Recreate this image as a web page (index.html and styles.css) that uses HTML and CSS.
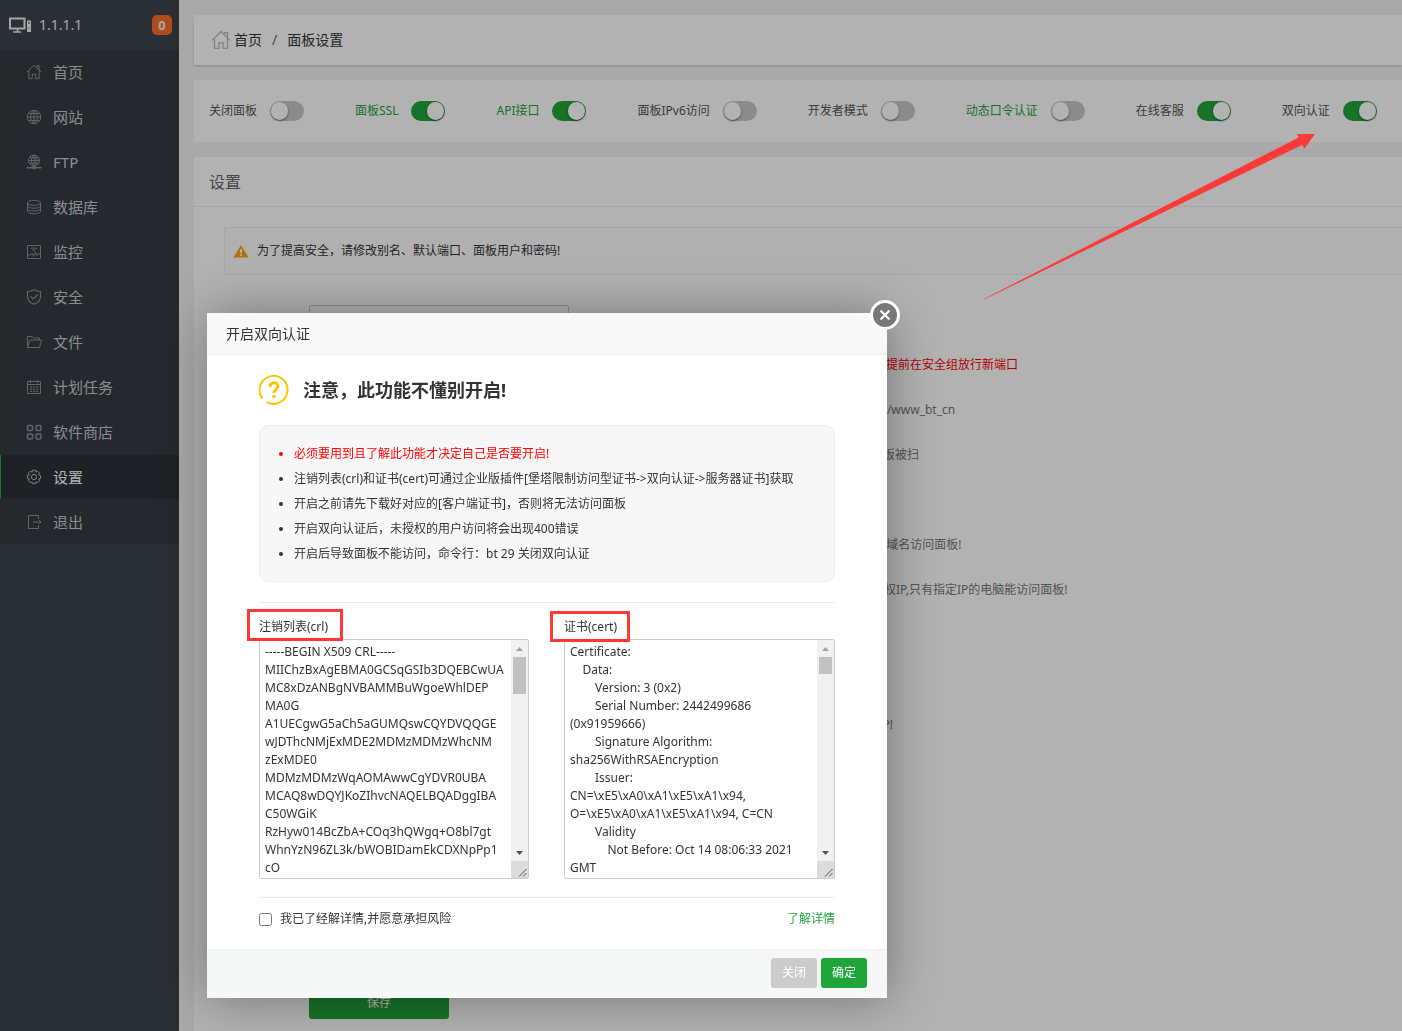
FILE: index.html
```
<!DOCTYPE html>
<html lang="zh-CN">
<head>
<meta charset="utf-8">
<meta name="viewport" content="width=device-width, initial-scale=1">
<title>面板设置</title>
<link rel="stylesheet" href="styles.css">
</head>
<body>
<div class="app">
  <nav class="sidebar">
    <div class="server">
      <svg class="server-icon" viewBox="0 0 24 18" fill="none" stroke="#eee" stroke-width="2"><path d="M2 2.500h14.500v10H2z"/><path d="M5 16h8M9.500 13v3" stroke-width="1.600"/><path d="M19 4.500h4v11.500h-4z" fill="#eee" stroke="none"/><path d="M20 7h2M20.500 12h1" stroke="#3c444d" stroke-width="1"/></svg>
      <span class="server-ip">1.1.1.1</span>
      <span class="badge">0</span>
    </div>
    <ul class="menu">
      <li><a href="#"><svg viewBox="0 0 16 16"><path d="M.8 8.300 8 1.200l7.200 7.100M2.800 7v7.700h3.500v-4.500h3.400v4.500h3.500V7M11 3.500V2h2.200v4"/></svg>首页</a></li>
      <li><a href="#"><svg viewBox="0 0 16 16"><circle cx="8" cy="8" r="6.700"/><path d="M1.300 8h13.400M8 1.300v13.400M2.500 4.500h11M2.500 11.500h11M8 1.300c-4.500 4-4.500 9.400 0 13.400M8 1.300c4.500 4 4.500 9.400 0 13.400"/></svg>网站</a></li>
      <li><a href="#"><svg viewBox="0 0 16 16"><circle cx="8" cy="6.500" r="5.500"/><path d="M2.500 6.500h11M8 1v13M3.500 3.700h9M3.500 9.300h9M8 1C4.500 4 4.500 9 8 12M8 1c3.500 3 3.500 8 0 11"/><path d="M.5 13.700h15" stroke-width="1.500"/><path d="M6.500 13.700h3" stroke-width="3"/></svg>FTP</a></li>
      <li><a href="#"><svg viewBox="0 0 16 16"><ellipse cx="8" cy="3.800" rx="6.500" ry="2.500"/><path d="M1.500 3.800v8.500c0 3.400 13 3.400 13 0V3.800M1.500 6.700c0 3.400 13 3.400 13 0M1.500 9.500c0 3.400 13 3.400 13 0"/></svg>数据库</a></li>
      <li><a href="#"><svg viewBox="0 0 16 16"><path d="M1.500 1.500h13v13h-13zM5 4.200h6M6.500 6.200h3M1.500 11h3l1.500-2 1.500 3.500L9.500 8l1.500 3.500 1-1.500h2.500"/></svg>监控</a></li>
      <li><a href="#"><svg viewBox="0 0 16 16"><path d="M8 .8c2 1.300 4.300 1.700 6.500 1.700v5.300c0 3.700-2.500 6-6.500 7.500-4-1.500-6.500-3.800-6.500-7.500V2.500C3.700 2.500 6 2.100 8 .8zM4.500 7.500 7.200 10l4.500-4.500" stroke-width="1.200"/></svg>安全</a></li>
      <li><a href="#"><svg viewBox="0 0 16 16"><path d="M1.500 13V2.500h4.800L7.500 4h6v2M1.500 13.500 4 6h11.500l-2 7.500z"/></svg>文件</a></li>
      <li><a href="#"><svg viewBox="0 0 16 16"><path d="M1.500 2.500h13v12h-13zM1.500 5.500h13M4.500 1v3M11.500 1v3"/><path d="M4 8h8M4 10.200h8M4 12.400h8" stroke-dasharray="2 1"/></svg>计划任务</a></li>
      <li><a href="#"><svg viewBox="0 0 16 16" stroke-width="1.500"><rect x="1.500" y="1.500" width="5" height="5" rx="1"/><rect x="10" y="1.500" width="5" height="5" rx="1"/><rect x="1.500" y="10" width="5" height="5" rx="1"/><rect x="10" y="10" width="5" height="5" rx="1"/></svg>软件商店</a></li>
      <li class="active"><a href="#"><svg viewBox="0 0 16 16"><path d="M6.600 1.200h2.800l.5 1.900 1.700-.9 2 2-.9 1.700 1.900.6v2.900l-1.900.6.9 1.700-2 2-1.700-.9-.5 1.900H6.600l-.5-1.900-1.700.9-2-2 .9-1.700-1.900-.6V6.500l1.900-.6-.9-1.700 2-2 1.700.9z"/><circle cx="8" cy="8" r="2.600"/></svg>设置</a></li>
      <li><a href="#"><svg viewBox="0 0 16 16"><path d="M12.500 5V1.500h-10v13h10V11M7 8h8M13 6l2 2-2 2"/></svg>退出</a></li>
    </ul>
  </nav>

  <main class="main">
    <div class="card crumbs">
      <svg class="home-icon" viewBox="0 0 16 16"><path d="M.8 8.300 8 1.200l7.200 7.100M2.800 7v7.700h3.500v-4.500h3.400v4.500h3.500V7M11 3.500V2h2.200v4"/></svg>
      <a href="#">首页</a><span class="slash">/</span><span>面板设置</span>
    </div>

    <div class="card switches">
      <div class="switch-item"><label for="s1">关闭面板</label><input class="switch" type="checkbox" id="s1"></div>
      <div class="switch-item link"><label for="s2">面板SSL</label><input class="switch" type="checkbox" id="s2" checked></div>
      <div class="switch-item link"><label for="s3">API接口</label><input class="switch" type="checkbox" id="s3" checked></div>
      <div class="switch-item"><label for="s4">面板IPv6访问</label><input class="switch" type="checkbox" id="s4"></div>
      <div class="switch-item"><label for="s5">开发者模式</label><input class="switch" type="checkbox" id="s5"></div>
      <div class="switch-item link"><label for="s6">动态口令认证</label><input class="switch" type="checkbox" id="s6"></div>
      <div class="switch-item"><label for="s7">在线客服</label><input class="switch" type="checkbox" id="s7" checked></div>
      <div class="switch-item"><label for="s8">双向认证</label><input class="switch" type="checkbox" id="s8" checked></div>
    </div>

    <section class="card settings">
      <h2>设置</h2>
      <div class="settings-body">
        <div class="alert">
          <svg viewBox="0 0 16 14"><path d="M8 1 15.500 13.500H.5z" fill="#ff9f0f"/><path d="M7 5.200h2v3.600H7zM7 10h2v1.800H7z" fill="#fff"/></svg>
          为了提高安全，请修改别名、默认端口、面板用户和密码!
        </div>
        <form class="form">
          <div class="row"><input aria-label="别名"></div>
          <div class="row"><input aria-label="面板端口"><span class="hint danger">建议端口范围8888 - 65535， 注意：有安全组的服务器请提前在安全组放行新端口</span></div>
          <div class="row"><input aria-label="安全入口"><span class="hint">面板管理入口,设置后只能通过指定安全入口登录面板, 如: /www_bt_cn</span></div>
          <div class="row"><input aria-label="未认证状态"><span class="hint">用于未登录且未正确输入安全入口时的响应，可以防止面板被扫</span></div>
          <div class="row"><input aria-label="超时时间"></div>
          <div class="row"><input aria-label="绑定域名"><span class="hint">为面板绑定一个访问域名；注意：一旦绑定域名,只能通过域名访问面板!</span></div>
          <div class="row"><input aria-label="授权IP"><span class="hint">设置访问授权IP,多个请使用逗号隔开；注意：一旦设置授权IP,只有指定IP的电脑能访问面板!</span></div>
          <div class="row"><input aria-label="建站目录"></div>
          <div class="row"><input aria-label="备份目录"></div>
          <div class="row"><input aria-label="服务器IP"><span class="hint">默认为外网IP,若您在本地虚拟机测试, 请填写虚拟机内网IP!</span></div>
          <div class="row"><input aria-label="服务器时间"></div>
          <div class="row"><input aria-label="面板用户"></div>
          <div class="row"><input aria-label="面板密码"></div>
          <div class="row"><input aria-label="宝塔账号"></div>
          <div class="row"><input aria-label="菜单管理"></div>
          <button class="save" type="button">保存</button>
        </form>
      </div>
    </section>
  </main>
</div>

<div class="overlay"></div>

<div class="modal" role="dialog" aria-labelledby="modal-title">
  <button class="close" type="button" aria-label="关闭窗口"><svg viewBox="0 0 12 12"><path d="M1.500 1.500l9 9M10.500 1.500l-9 9"/></svg></button>
  <header class="modal-head" id="modal-title">开启双向认证</header>
  <div class="modal-body">
    <div class="notice">
      <svg viewBox="0 0 30 30" fill="none" stroke="#f8c600"><path d="M3.500 23.500A14 14 0 1 1 7.500 27" stroke-width="2"/><path d="M11 12c0-5.500 8-5.500 8-.7 0 3.200-4 3-4 6.700" stroke-width="3"/><path d="M13.500 20h3v3h-3z" fill="#f8c600" stroke="none"/></svg>
      <h3>注意，此功能不懂别开启!</h3>
    </div>
    <ul class="tips">
      <li class="warn">必须要用到且了解此功能才决定自己是否要开启!</li>
      <li>注销列表(crl)和证书(cert)可通过企业版插件[堡塔限制访问型证书-&gt;双向认证-&gt;服务器证书]获取</li>
      <li>开启之前请先下载好对应的[客户端证书]，否则将无法访问面板</li>
      <li>开启双向认证后，未授权的用户访问将会出现400错误</li>
      <li>开启后导致面板不能访问，命令行：bt 29 关闭双向认证</li>
    </ul>
    <div class="certs">
      <div class="cert">
        <label for="crl">注销列表(crl)</label>
        <div class="area">
          <textarea id="crl">-----BEGIN X509 CRL-----
MIIChzBxAgEBMA0GCSqGSIb3DQEBCwUA
MC8xDzANBgNVBAMMBuWgoeWhlDEP
MA0G
A1UECgwG5aCh5aGUMQswCQYDVQQGE
wJDThcNMjExMDE2MDMzMDMzWhcNM
zExMDE0
MDMzMDMzWqAOMAwwCgYDVR0UBA
MCAQ8wDQYJKoZIhvcNAQELBQADggIBA
C50WGiK
RzHyw014BcZbA+COq3hQWgq+O8bl7gt
WhnYzN96ZL3k/bWOBIDamEkCDXNpPp1
cO</textarea>
          <div class="scroll">
            <svg viewBox="0 0 17 17"><path d="M5 11h7L8.500 7z" fill="#a3a3a3"/></svg>
            <span class="thumb long"></span>
            <svg class="down" viewBox="0 0 17 17"><path d="M5 7h7l-3.500 4z" fill="#505050"/></svg>
            <svg class="grip" viewBox="0 0 17 17"><path d="M8 15.500 15.500 8M12 15.500l3.500-3.500" stroke="#555"/></svg>
          </div>
        </div>
      </div>
      <div class="cert">
        <label for="cert">证书(cert)</label>
        <div class="area">
          <textarea id="cert">Certificate:
    Data:
        Version: 3 (0x2)
        Serial Number: 2442499686
(0x91959666)
        Signature Algorithm:
sha256WithRSAEncryption
        Issuer:
CN=\xE5\xA0\xA1\xE5\xA1\x94,
O=\xE5\xA0\xA1\xE5\xA1\x94, C=CN
        Validity
            Not Before: Oct 14 08:06:33 2021
GMT</textarea>
          <div class="scroll">
            <svg viewBox="0 0 17 17"><path d="M5 11h7L8.500 7z" fill="#a3a3a3"/></svg>
            <span class="thumb"></span>
            <svg class="down" viewBox="0 0 17 17"><path d="M5 7h7l-3.500 4z" fill="#505050"/></svg>
            <svg class="grip" viewBox="0 0 17 17"><path d="M8 15.500 15.500 8M12 15.500l3.500-3.500" stroke="#555"/></svg>
          </div>
        </div>
      </div>
    </div>
    <div class="agree">
      <input type="checkbox" id="agree"><label for="agree">我已了经解详情,并愿意承担风险</label>
      <a href="#">了解详情</a>
    </div>
  </div>
  <footer class="modal-foot">
    <button class="btn" type="button">关闭</button>
    <button class="btn primary" type="button">确定</button>
  </footer>
</div>

<svg class="marks" width="1402" height="660" viewBox="0 0 1402 660">
  <path d="M983 299.500 1298.500 137.500 1297 134h18l-10.500 14.500-2.500-3.500L984 299.500z" fill="#fd3a38"/>
  <path d="M248.500 610.500h93v29h-93zM551.500 612.500h77v28h-77z" fill="none" stroke="#fd3a38" stroke-width="3"/>
</svg>
</body>
</html>
```

FILE: styles.css
```
* { box-sizing: border-box; }

body {
  margin: 0;
  background: #f3f3f3;
  color: #333;
  font: 12px/20px "Noto Sans", "Noto Sans CJK SC", sans-serif;
}

a { color: inherit; text-decoration: none; }
button, input, textarea { font: inherit; }
ul { margin: 0; padding: 0; }

.app {
  display: flex;
  min-height: 100vh;
  overflow: hidden;
}

/* Sidebar */
.sidebar {
  flex: none;
  width: 179px;
  background: #3d434d;
}

.server {
  display: flex;
  align-items: center;
  height: 50px;
  padding: 0 7px 0 8px;
  color: #eee;
  font-size: 14px;
}

.server-icon { width: 24px; height: 18px; margin-right: 7px; }

.badge {
  width: 20px;
  height: 20px;
  margin-left: auto;
  border-radius: 5px;
  background: #fc6d26;
  font-size: 13px;
  font-weight: 700;
  line-height: 20px;
  text-align: center;
}

.menu { list-style: none; background: #353b43; }

.menu a {
  display: flex;
  align-items: center;
  gap: 11px;
  height: 44px;
  margin-bottom: 1px;
  padding-left: 25px;
  border-left: 1px solid #3a3a3c;
  color: #c8c8c8;
  font-size: 15px;
}

.menu svg, .home-icon {
  width: 16px;
  height: 16px;
  fill: none;
  stroke: #8c8f92;
}

.menu .active a {
  border-color: #20a53a;
  background: #2c3036;
  color: #fff;
}

.menu .active svg { stroke: #bbb; }

/* Main column */
.main {
  display: flex;
  flex: 1;
  flex-direction: column;
  gap: 15px;
  min-width: 0;
  padding: 15px 0 0 15px;
}

.card { background: #fff; }

.crumbs {
  display: flex;
  align-items: center;
  height: 50px;
  padding-left: 17px;
  box-shadow: 0 1px 2px rgba(0, 0, 0, .2);
  font-size: 14px;
}

.crumbs .home-icon { width: 20px; height: 20px; margin-right: 3px; stroke: #bbb; }
.slash { margin: 0 10px; color: #666; }

.switches {
  display: flex;
  gap: 51px;
  height: 62px;
  padding: 0 24px 0 15px;
}

.switch-item {
  display: flex;
  flex: none;
  align-items: center;
  gap: 13px;
  white-space: nowrap;
  color: #555;
}

.switch-item.link { color: #20a53a; }

.switch {
  appearance: none;
  width: 34px;
  height: 20px;
  margin: 0;
  padding: 1px;
  border-radius: 10px;
  background: #c8c8c8;
}

.switch::before {
  content: "";
  display: block;
  width: 17px;
  height: 18px;
  border-radius: 9px;
  background: #fff;
  box-shadow: 0 1px 2px rgba(0, 0, 0, .5);
}

.switch:checked { background: #20a53a; }
.switch:checked::before { margin-left: 15px; }

.settings { flex: 1; }

.settings h2 {
  height: 50px;
  margin: 0;
  padding-left: 15px;
  border-bottom: 1px solid #eee;
  color: #666;
  font-size: 16px;
  font-weight: 400;
  line-height: 50px;
}

.settings-body { padding: 20px 0 0 30px; }

.alert {
  display: flex;
  align-items: center;
  gap: 8px;
  height: 48px;
  padding-left: 8px;
  border: 1px solid #eee;
  border-right: 0;
  background: #fcfcfc;
}

.alert svg { width: 16px; height: 14px; }

.form { padding: 30px 0 0 85px; }

.row {
  display: flex;
  align-items: center;
  height: 30px;
  margin-bottom: 15px;
}

.row input {
  flex: none;
  width: 260px;
  height: 30px;
  border: 1px solid #ccc;
  border-radius: 2px;
}

.hint { margin-left: 14px; color: #777; white-space: nowrap; }
.danger { color: #f00; }

.save {
  width: 140px;
  height: 32px;
  margin: 7px 0 12px;
  border: 0;
  border-radius: 3px;
  background: #20a53a;
  color: #fff;
}

/* Dialog */
.overlay {
  position: fixed;
  inset: 0;
  background: rgba(0, 0, 0, .3);
}

.modal {
  position: absolute;
  top: 313px;
  left: 207px;
  width: 680px;
  border-radius: 2px;
  background: #fff;
  box-shadow: 1px 1px 50px rgba(0, 0, 0, .35);
}

.close {
  position: absolute;
  top: -13px;
  right: -13px;
  display: grid;
  place-items: center;
  width: 30px;
  height: 30px;
  padding: 0;
  border: 3px solid #fff;
  border-radius: 50%;
  background: #787878;
}

.close svg { width: 12px; height: 12px; stroke: #fff; stroke-width: 2; }

.modal-head {
  height: 42px;
  padding-left: 19px;
  border-bottom: 1px solid #eee;
  background: #f8f8f8;
  font-size: 14px;
  line-height: 42px;
}

.modal-body { padding: 20px 52px; }

.notice { display: flex; align-items: center; gap: 14px; }
.notice svg { width: 30px; height: 30px; }
.notice h3 { margin: 0; font-size: 18px; line-height: 30px; }

.tips {
  margin-top: 20px;
  padding: 15px 0 15px 34px;
  border: 1px solid #ebebeb;
  border-radius: 10px;
  background: #f7f7f7;
  line-height: 25px;
}

.warn { color: #f00; }

.certs {
  display: grid;
  grid-template-columns: 270px 1fr;
  gap: 35px;
  margin: 20px 0 18px;
  padding-top: 12px;
  border-top: 1px solid #ebebeb;
}

.cert label { display: block; height: 24px; line-height: 24px; }

.area {
  display: flex;
  height: 240px;
  border: 1px solid #ccc;
  border-radius: 2px;
}

.area textarea {
  flex: 1;
  min-width: 0;
  padding: 3px 0 0 5px;
  border: 0;
  outline: 0;
  background: none;
  color: #333;
  line-height: 18px;
  white-space: pre;
  overflow: hidden;
  resize: none;
}

.scroll {
  display: flex;
  flex: none;
  flex-direction: column;
  width: 17px;
  background: #f1f1f1;
}

.scroll svg { flex: none; width: 17px; height: 17px; fill: none; }
.thumb { height: 17px; margin: 0 2px; background: #c1c1c1; }
.thumb.long { height: 37px; }
.down { margin-top: auto; }
.grip { background: #dcdcdc; }

.agree {
  display: flex;
  align-items: center;
  padding-top: 11px;
  border-top: 1px solid #ebebeb;
}

.agree input { width: 13px; height: 13px; margin: 0 8px 0 0; }
.agree a { margin-left: auto; color: #20a53a; }

.modal-foot {
  display: flex;
  justify-content: flex-end;
  gap: 4px;
  padding: 8px 20px 10px;
  border-top: 1px solid #edf1f0;
  background: #f6f8f8;
}

.btn {
  width: 46px;
  height: 30px;
  padding: 0;
  border: 0;
  border-radius: 3px;
  background: #cbcbcb;
  color: #fff;
}

.primary { background: #20a53a; }

/* Callouts drawn above everything */
.marks {
  position: absolute;
  top: 0;
  left: 0;
  pointer-events: none;
}
```
